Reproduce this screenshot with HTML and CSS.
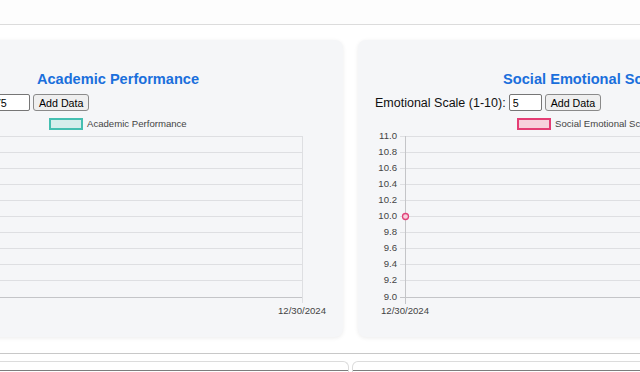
FILE: index.html
```html
<!DOCTYPE html>
<html lang="en">
<head>
    <meta charset="UTF-8">
    <meta name="viewport" content="width=device-width, initial-scale=1.0">
    <title>Student Progress</title>
    <link rel="stylesheet" href="styles.css">
</head>
<body>
    <header class="topbar"></header>

    <main class="charts">
        <!-- Academic chart -->
        <section class="card">
            <h2 class="card-title">Academic Performance</h2>
            <div class="controls">
                <label for="academicScore">Score (0-100):</label>
                <input type="text" id="academicScore" class="wide" value="75">
                <button type="button">Add Data</button>
            </div>
            <svg class="chart" width="416" height="210" viewBox="0 0 416 210">
                <rect x="140" y="8" width="32" height="10" class="legend-box teal"/>
                <text x="177" y="13" class="legend-text">Academic Performance</text>
                <g class="grid">
                    <line x1="25" y1="25.5" x2="392" y2="25.5"/>
                    <line x1="25" y1="41.5" x2="392" y2="41.5"/>
                    <line x1="25" y1="57.5" x2="392" y2="57.5"/>
                    <line x1="25" y1="73.5" x2="392" y2="73.5"/>
                    <line x1="25" y1="89.5" x2="392" y2="89.5"/>
                    <line x1="25" y1="105.5" x2="392" y2="105.5"/>
                    <line x1="25" y1="121.5" x2="392" y2="121.5"/>
                    <line x1="25" y1="137.5" x2="392" y2="137.5"/>
                    <line x1="25" y1="153.5" x2="392" y2="153.5"/>
                    <line x1="25" y1="169.5" x2="392" y2="169.5"/>
                    <line x1="392.5" y1="25" x2="392.5" y2="192"/>
                </g>
                <line x1="25" y1="186.5" x2="392" y2="186.5" class="axis"/>
                <line x1="30.5" y1="25" x2="30.5" y2="192" class="axis"/>
                <text x="392" y="200" class="tick" text-anchor="middle">12/30/2024</text>
            </svg>
        </section>

        <!-- Social emotional chart -->
        <section class="card">
            <h2 class="card-title">Social Emotional Scale</h2>
            <div class="controls">
                <label for="emotionalScale">Emotional Scale (1-10):</label>
                <input type="text" id="emotionalScale" value="5">
                <button type="button">Add Data</button>
            </div>
            <svg class="chart" width="416" height="210" viewBox="0 0 416 210">
                <rect x="143" y="8" width="32" height="10" class="legend-box pink"/>
                <text x="180" y="13" class="legend-text">Social Emotional Scale</text>
                <g class="grid">
                    <line x1="25" y1="25.5" x2="392" y2="25.5"/>
                    <line x1="25" y1="41.5" x2="392" y2="41.5"/>
                    <line x1="25" y1="57.5" x2="392" y2="57.5"/>
                    <line x1="25" y1="73.5" x2="392" y2="73.5"/>
                    <line x1="25" y1="89.5" x2="392" y2="89.5"/>
                    <line x1="25" y1="105.5" x2="392" y2="105.5"/>
                    <line x1="25" y1="121.5" x2="392" y2="121.5"/>
                    <line x1="25" y1="137.5" x2="392" y2="137.5"/>
                    <line x1="25" y1="153.5" x2="392" y2="153.5"/>
                    <line x1="25" y1="169.5" x2="392" y2="169.5"/>
                </g>
                <line x1="25" y1="186.5" x2="392" y2="186.5" class="axis"/>
                <line x1="30.5" y1="25" x2="30.5" y2="193" class="axis"/>
                <g class="tick" text-anchor="end">
                    <text x="22" y="25.5">11.0</text>
                    <text x="22" y="41.5">10.8</text>
                    <text x="22" y="57.5">10.6</text>
                    <text x="22" y="73.5">10.4</text>
                    <text x="22" y="89.5">10.2</text>
                    <text x="22" y="105.5">10.0</text>
                    <text x="22" y="121.5">9.8</text>
                    <text x="22" y="137.5">9.6</text>
                    <text x="22" y="153.5">9.4</text>
                    <text x="22" y="169.5">9.2</text>
                    <text x="22" y="186.5">9.0</text>
                </g>
                <text x="30" y="200" class="tick" text-anchor="middle">12/30/2024</text>
                <circle cx="30.5" cy="105.5" r="3" class="point"/>
            </svg>
        </section>
    </main>

    <!-- next row of panels -->
    <footer class="lower">
        <div class="panels">
            <div class="panel"><div class="panel-bar"></div></div>
            <div class="panel"><div class="panel-bar"></div></div>
        </div>
    </footer>
</body>
</html>
```

FILE: styles.css
```css
body {
    margin: 0;
    font-family: "Liberation Sans", Arial, sans-serif;
    background: #fff;
    overflow: hidden;
    height: 372px;
}
.topbar {
    height: 24px;
    background: #fdfdfd;
    border-bottom: 1px solid #dcdcdc;
}
.charts {
    display: flex;
    gap: 15px;
    margin: 15px 0 0 -107px;
}
.card {
    flex: 0 0 450px;
    box-sizing: border-box;
    height: 297px;
    padding: 31px 17px 16px;
    background: #f5f6f8;
    border-radius: 8px;
    box-shadow: 0 1px 4px rgba(0,0,0,0.08);
}
.card-title {
    margin: 0 0 6px;
    font-size: 14.6px;
    line-height: 17px;
    font-weight: bold;
    color: #1a6fdc;
    text-align: center;
}
.controls {
    display: flex;
    align-items: center;
    gap: 3px;
    height: 17px;
    font-size: 12.5px;
    color: #111;
    white-space: nowrap;
}
.controls input {
    box-sizing: border-box;
    width: 33px;
    height: 17px;
    padding: 0 3px;
    border: 1px solid #767676;
    border-radius: 2px;
    background: #fff;
    font: 10.7px "Liberation Sans", Arial, sans-serif;
    color: #000;
}
.controls input.wide {
    width: 37px;
    padding: 0 1px;
}
.controls button {
    box-sizing: border-box;
    height: 17px;
    padding: 0 5px;
    border: 1px solid #8a8a8a;
    border-radius: 3px;
    background: #efefef;
    font: 10.7px "Liberation Sans", Arial, sans-serif;
    color: #000;
}
.chart {
    display: block;
    overflow: visible;
    font-family: "Liberation Sans", Arial, sans-serif;
}
.legend-box {
    stroke-width: 2;
}
.legend-box.teal {
    fill: #d5eeec;
    stroke: #45bfb1;
}
.legend-box.pink {
    fill: #f7d0dc;
    stroke: #e43d74;
}
.legend-text {
    font-size: 9.6px;
    fill: #444;
    dominant-baseline: middle;
}
.grid line {
    stroke: #dedfe2;
    stroke-width: 1;
}
.axis {
    stroke: #c4c5c8;
    stroke-width: 1;
}
.tick, .tick text {
    font-size: 9.6px;
    fill: #444;
    dominant-baseline: middle;
}
.point {
    fill: #f7d0dc;
    stroke: #e0437a;
    stroke-width: 1.3;
}
.lower {
    margin-top: 16px;
    border-top: 1px solid #c8c8c8;
}
.panels {
    display: grid;
    grid-template-columns: 359px 1fr;
    gap: 3px;
    margin: 7px -10px 0;
}
.panel {
    height: 10px;
    border: 1px solid #dcdcdc;
    border-bottom: none;
    border-radius: 6px 6px 0 0;
}
.panel-bar {
    height: 8px;
    border-bottom: 1px solid #7d7d7d;
}
```
